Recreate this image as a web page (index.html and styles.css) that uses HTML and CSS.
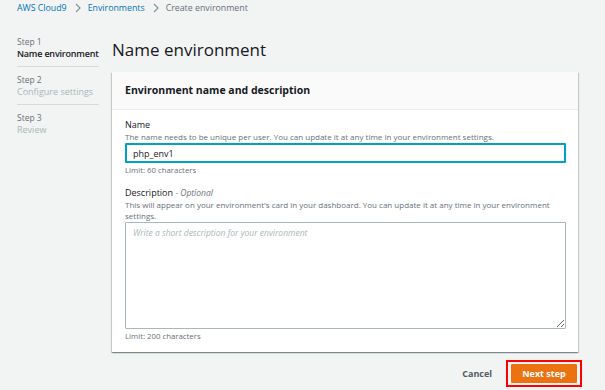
FILE: index.html
```html
<!DOCTYPE html>
<html lang="en">
<head>
  <meta charset="UTF-8">
  <title>Create environment</title>
  <link rel="stylesheet" href="styles.css">
</head>
<body>
  <div class="crumbs">
    <a class="crumb-link">AWS Cloud9</a>
    <svg class="crumb-sep" width="8" height="10" viewBox="0 0 8 10"><path d="M2 1l4 4-4 4" fill="none" stroke="#879596" stroke-width="1.2"/></svg>
    <a class="crumb-link">Environments</a>
    <svg class="crumb-sep" width="8" height="10" viewBox="0 0 8 10"><path d="M2 1l4 4-4 4" fill="none" stroke="#879596" stroke-width="1.2"/></svg>
    <span class="crumb-cur">Create environment</span>
  </div>
  <div class="layout">
    <div class="steps">
      <div class="step">
        <div class="step-num">Step 1</div>
        <div class="step-name active">Name environment</div>
      </div>
      <div class="step">
        <div class="step-num">Step 2</div>
        <div class="step-name">Configure settings</div>
      </div>
      <div class="step last">
        <div class="step-num">Step 3</div>
        <div class="step-name">Review</div>
      </div>
    </div>
    <div class="main">
      <div class="page-title">Name environment</div>
      <div class="card">
        <div class="card-head">Environment name and description</div>
        <div class="card-body">
          <div class="field">
            <div class="label">Name</div>
            <div class="hint">The name needs to be unique per user. You can update it at any time in your environment settings.</div>
            <input class="text-input" value="php_env1">
            <div class="limit">Limit: 60 characters</div>
          </div>
          <div class="field">
            <div class="label">Description <i class="optional">- Optional</i></div>
            <div class="hint">This will appear on your environment's card in your dashboard. You can update it at any time in your environment settings.</div>
            <textarea class="text-area" placeholder="Write a short description for your environment"></textarea>
            <div class="limit">Limit: 200 characters</div>
          </div>
        </div>
      </div>
      <div class="actions">
        <button class="btn-cancel">Cancel</button>
        <div class="highlight">
          <button class="btn-next">Next step</button>
        </div>
      </div>
    </div>
  </div>
</body>
</html>
```

FILE: styles.css
```css
body { background: #f2f3f3; font-family: 'Open Sans', Arial, sans-serif; margin: 0; color: #16191f; }
.crumbs { padding: 1px 17px 0 17px; height: 14px; font-size: 8.8px; line-height: 14px; display: flex; align-items: center; }
.crumb-link { color: #0073bb; }
.crumb-sep { margin: 0 6px 0 7px; }
.crumb-cur { color: #687078; }
.layout { display: flex; padding: 21px 0 0 17px; }
.steps { width: 82px; }
.step { border-bottom: 1px solid #d5dbdb; padding: 0 0 7px 0; margin-bottom: 7px; }
.step.last { border-bottom: none; }
.step-num { font-size: 8.5px; color: #687078; line-height: 12px; }
.step-name { font-size: 9px; color: #aab7b8; line-height: 11px; white-space: nowrap; }
.step-name.active { color: #16191f; font-weight: 600; letter-spacing: -0.2px; }
.main { width: 466px; margin-left: 13px; }
.page-title { font-size: 17px; line-height: 24px; padding-top: 2px; height: 34px; }
.card { background: #fff; box-shadow: 0 1px 1px rgba(0,28,36,0.3), 1px 1px 1px rgba(0,28,36,0.15), -1px 1px 1px rgba(0,28,36,0.15); }
.card-head { background: #fafafa; border-bottom: 1px solid #eaeded; height: 37px; line-height: 37px; padding: 0 13px; font-size: 10.5px; font-weight: 700; }
.card-body { padding: 9px 12px 10px 13px; }
.field { margin-bottom: 11px; }
.field:last-child { margin-bottom: 0; }
.label { font-size: 9px; line-height: 12px; color: #16191f; }
.optional { color: #687078; font-size: 8.5px; }
.hint { font-size: 8px; line-height: 11px; color: #687078; margin-bottom: 1px; }
.text-input { display: block; box-sizing: border-box; width: 441px; height: 20px; border: 2px solid #00a1c9; border-radius: 1px; padding: 0 6px; font-family: inherit; font-size: 9px; color: #16191f; outline: none; }
.text-area { display: block; box-sizing: border-box; width: 441px; height: 107px; border: 1px solid #aab7b8; border-radius: 1px; padding: 4px 7px; font-family: inherit; font-size: 8.5px; margin: 0; resize: vertical; }
.text-area::placeholder { color: #aab7b8; font-style: italic; }
.limit { font-size: 7.8px; color: #687078; line-height: 11px; margin-top: 2px; }
.actions { display: flex; justify-content: flex-end; align-items: center; padding-top: 8px; margin-right: -4px; }
.btn-cancel { background: none; border: none; color: #545b64; font-family: inherit; font-weight: 700; font-size: 9px; margin-right: 14px; padding: 0; cursor: pointer; }
.highlight { border: 2px solid #ff0000; padding: 2px 3px; }
.btn-next { display: block; background: #ec7211; color: #fff; border: 1px solid #ec7211; font-family: inherit; font-weight: 700; font-size: 9px; width: 66px; height: 19px; padding: 0; border-radius: 1px; cursor: pointer; }
```
